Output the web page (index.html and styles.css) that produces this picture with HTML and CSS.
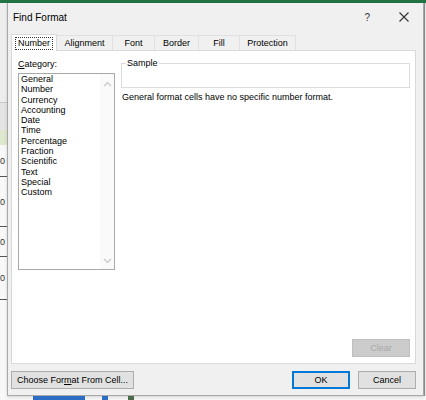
FILE: index.html
```html
<!DOCTYPE html>
<html>
<head>
<meta charset="utf-8">
<link rel="stylesheet" href="styles.css">
</head>
<body>
<div class="topbar"></div>
<div class="stage">
  <div class="sheet-left">
    <div class="sl-cell c1"></div>
    <div class="sl-cell c2"></div>
    <div class="sl-cell sl-green"></div>
    <div class="sl-cell c4">0</div>
    <div class="sl-cell c5">0</div>
    <div class="sl-cell c6">0</div>
    <div class="sl-cell c7">0</div>
  </div>
  <div class="dialog">
    <div class="titlebar">
      <span class="title">Find Format</span>
      <span class="tb-btns"><span class="help">?</span>
        <svg class="close" width="10" height="10" viewBox="0 0 10 10"><path d="M0.5 0.5L9.5 9.5M9.5 0.5L0.5 9.5" stroke="#333" stroke-width="1.1" fill="none"/></svg>
      </span>
    </div>
    <div class="tabs">
      <div class="tab active t1"><span class="focus">Number</span></div>
      <div class="tab t2">Alignment</div>
      <div class="tab t3">Font</div>
      <div class="tab t4">Border</div>
      <div class="tab t5">Fill</div>
      <div class="tab t6">Protection</div>
    </div>
    <div class="panel">
      <div class="cols">
        <div class="catcol">
          <div class="label"><u>C</u>ategory:</div>
          <div class="listbox">
            <ul class="items">
              <li>General</li>
              <li>Number</li>
              <li>Currency</li>
              <li>Accounting</li>
              <li>Date</li>
              <li>Time</li>
              <li>Percentage</li>
              <li>Fraction</li>
              <li>Scientific</li>
              <li>Text</li>
              <li>Special</li>
              <li>Custom</li>
            </ul>
            <div class="scroll">
              <svg width="9" height="6" viewBox="0 0 9 6"><path d="M1 5L4.5 1.5L8 5" stroke="#c8c8c8" stroke-width="1.2" fill="none"/></svg>
              <svg width="9" height="6" viewBox="0 0 9 6"><path d="M1 1L4.5 4.5L8 1" stroke="#c8c8c8" stroke-width="1.2" fill="none"/></svg>
            </div>
          </div>
        </div>
        <div class="maincol">
          <fieldset class="sample"><legend>Sample</legend></fieldset>
          <div class="desc">General format cells have no specific number format.</div>
        </div>
      </div>
      <div class="clearrow"><button class="btn clear" disabled>Clear</button></div>
    </div>
    <div class="footer">
      <button class="btn choose">Choose For<u>m</u>at From Cell...</button>
      <div class="okcancel">
        <button class="btn ok">OK</button>
        <button class="btn">Cancel</button>
      </div>
    </div>
  </div>
  <div class="sheet-right"></div>
</div>
<div class="below">
  <div class="blue1"></div>
  <div class="blue2"></div>
  <div class="gray1"></div>
</div>
</body>
</html>
```
FILE: styles.css
```css
* { box-sizing: border-box; }
html, body { margin: 0; padding: 0; }
body {
  width: 426px;
  height: 400px;
  overflow: hidden;
  background: #f3f3f3;
  font-family: "Liberation Sans", Arial, sans-serif;
  font-size: 9px;
  color: #000;
}
.topbar { height: 3px; background: #217346; }
.stage { display: flex; height: 393px; }
.sheet-left {
  width: 7px;
  background: #f8f8f8;
  display: flex;
  flex-direction: column;
  overflow: hidden;
}
.sl-cell {
  border-bottom: 1px solid #555;
  font-size: 9px;
  color: #333;
  overflow: hidden;
  display: flex;
  align-items: center;
}
.c1 { height: 100px; background: #eeeeee; border-bottom-color: #c8c8c8; }
.c2 { height: 27px; background: #e4e4e4; border-bottom: none; }
.sl-green { height: 15px; background: #dfe8cf; border-bottom: none; }
.c4 { height: 32px; }
.c5 { height: 50px; }
.c6 { height: 30px; }
.c7 { height: 43px; }
.dialog {
  width: 417px;
  background: #f0f0f0;
  border: 1px solid #a8a8a8;
  border-top: none;
  display: flex;
  flex-direction: column;
  box-shadow: 0 1px 3px rgba(0,0,0,0.15);
}
.sheet-right {
  flex: 1;
  background: #e4e4e4;
  border-left: 1px solid #8c8c8c;
}
.titlebar {
  height: 28px;
  display: flex;
  align-items: center;
  justify-content: space-between;
  padding: 0 14px 0 5px;
  background: #f0f0f0;
}
.title { font-size: 10px; color: #000; }
.tb-btns { display: flex; align-items: center; gap: 29px; }
.help { font-size: 10px; color: #333; }
.tabs {
  display: flex;
  margin: 3px 0 0 3px;
  height: 16px;
  align-items: flex-end;
}
.tab {
  height: 15px;
  line-height: 14px;
  text-align: center;
  color: #000;
  background: #f0f0f0;
  border: 1px solid #e0e0e0;
  border-bottom: none;
  margin-right: -1px;
}
.t1 { width: 46px; }
.t2 { width: 57px; }
.t3 { width: 43px; }
.t4 { width: 45px; }
.t5 { width: 42px; }
.t6 { width: 57px; }
.tab.active {
  height: 17px;
  background: #fff;
  border-color: #d9d9d9;
  padding-top: 2px;
  line-height: 12px;
  position: relative;
  z-index: 1;
  margin-bottom: -1px;
}
.focus {
  display: inline-block;
  border: 1px dotted #333;
  padding: 0 2px;
  line-height: 11px;
}
.panel {
  margin: 0 7px 0 3px;
  height: 314px;
  background: #fff;
  border: 1px solid #d9d9d9;
  display: flex;
  flex-direction: column;
  justify-content: space-between;
  padding: 8px 5px 6px 6px;
}
.cols { display: flex; gap: 6px; }
.catcol { width: 97px; }
.label { line-height: 11px; margin-bottom: 3px; }
.label u { text-decoration-thickness: 1px; text-underline-offset: 1px; }
.listbox {
  height: 197px;
  border: 1px solid #a9a9a9;
  display: flex;
}
.items {
  list-style: none;
  margin: 0;
  padding: 0 0 0 2px;
  flex: 1;
}
.items li { line-height: 10.3px; }
.scroll {
  width: 14px;
  background: #fafafa;
  display: flex;
  flex-direction: column;
  justify-content: space-between;
  align-items: center;
  padding: 7px 0 5px;
}
.maincol { flex: 1; }
.sample {
  margin: 0;
  height: 29px;
  border: 1px solid #dcdcdc;
  padding: 0;
}
.sample legend {
  margin-left: 4px;
  padding: 0 1px;
  line-height: 9px;
}
.desc { margin-top: 4px; margin-left: 1px; }
.clearrow { display: flex; justify-content: flex-end; }
.btn {
  font-family: inherit;
  font-size: 9px;
  height: 18px;
  width: 58px;
  padding: 0;
  background: #e1e1e1;
  border: 1px solid #adadad;
  color: #000;
  white-space: nowrap;
}
.clear {
  background: #cccccc;
  border-color: #bfbfbf;
  color: #a8a8a8;
}
.footer {
  display: flex;
  justify-content: space-between;
  align-items: center;
  padding: 0 7px 0 3px;
  margin-top: 7px;
}
.choose { width: 123px; }
.okcancel { display: flex; gap: 8px; }
.ok { border: 1px solid #0078d7; box-shadow: inset 0 0 0 1px #0078d7; }
.below {
  height: 4px;
  display: flex;
  background: #f7f7f7;
}
.blue1 { margin-left: 33px; width: 52px; background: #2b6cc4; }
.blue2 { margin-left: 17px; width: 6px; background: #2b6cc4; }
.gray1 { margin-left: 20px; width: 6px; background: #4a6a4a; }
```
